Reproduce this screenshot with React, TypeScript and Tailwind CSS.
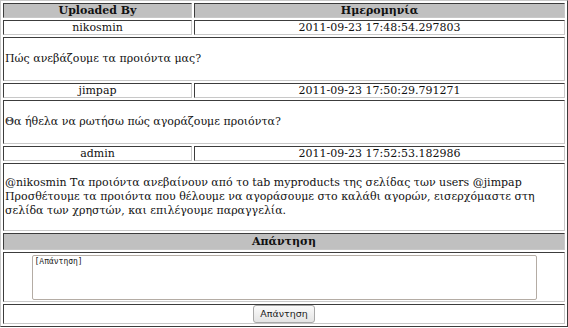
const posts = [
  {
    user: "nikosmin",
    date: "2011-09-23 17:48:54.297803",
    text: ["Πώς ανεβάζουμε τα προιόντα μας?"],
    h: "h-[44px]",
  },
  {
    user: "jimpap",
    date: "2011-09-23 17:50:29.791271",
    text: ["Θα ήθελα να ρωτήσω πώς αγοράζουμε προιόντα?"],
    h: "h-[44px]",
  },
  {
    user: "admin",
    date: "2011-09-23 17:52:53.182986",
    text: [
      "@nikosmin Τα προιόντα ανεβαίνουν από το tab myproducts της σελίδας των users @jimpap",
      "Προσθέτουμε τα προιόντα που θέλουμε να αγοράσουμε στο καλάθι αγορών, εισερχόμαστε στη",
      "σελίδα των χρηστών, και επιλέγουμε παραγγελία.",
    ],
    h: "h-[68px]",
  },
];

const cell =
  "border border-t-[#3c3c3c] border-l-[#3c3c3c] border-b-[#c8c8c8] border-r-[#c8c8c8] p-0 px-[1px]";

export default function App() {
  return (
    <div className="w-[568px] h-[328px] bg-white font-['DejaVu_Serif',serif] text-[11px] leading-[13px] text-[#111]">
      <table className="w-[568px] border-separate border-spacing-[2px] border border-t-[#c8c8c8] border-l-[#c8c8c8] border-b-[#3c3c3c] border-r-[#3c3c3c]">
        <tbody>
          <tr className="h-[15px]">
            <th className={`${cell} w-[189px] bg-[#c0c0c0] font-bold`}>Uploaded By</th>
            <th className={`${cell} bg-[#c0c0c0] font-bold`}>Ημερομηνία</th>
          </tr>
          {posts.map((p) => (
            <>
              <tr key={p.user + "h"} className="h-[15px]">
                <td className={`${cell} text-center`}>{p.user}</td>
                <td className={`${cell} text-center`}>{p.date}</td>
              </tr>
              <tr key={p.user + "m"} className={p.h}>
                <td colSpan={2} className={`${cell} text-left align-middle leading-[14px]`}>
                  {p.text.map((t, i) => (
                    <div key={i}>{t}</div>
                  ))}
                </td>
              </tr>
            </>
          ))}
          <tr className="h-[17px]">
            <th colSpan={2} className={`${cell} bg-[#c0c0c0] font-bold`}>Απάντηση</th>
          </tr>
          <tr className="h-[50px]">
            <td colSpan={2} className={`${cell} text-center align-middle`}>
              <textarea
                defaultValue="[Απάντηση]"
                className="block mx-auto w-[505px] h-[45px] resize-none border border-[#b4aca4] rounded-[2px] px-[2px] py-[1px] font-['DejaVu_Sans_Mono',monospace] text-[8px] leading-[10px] text-[#222] bg-white outline-none"
              />
            </td>
          </tr>
          <tr className="h-[19px]">
            <td colSpan={2} className={`${cell} text-center align-middle`}>
              <button className="w-[62px] h-[18px] border border-[#a8a8a8] rounded-[3px] bg-gradient-to-b from-[#fbfbfb] to-[#e4e4e4] font-['DejaVu_Sans',sans-serif] text-[9.5px] leading-[16px] text-[#222] align-middle">
                Απάντηση
              </button>
            </td>
          </tr>
        </tbody>
      </table>
    </div>
  );
}
